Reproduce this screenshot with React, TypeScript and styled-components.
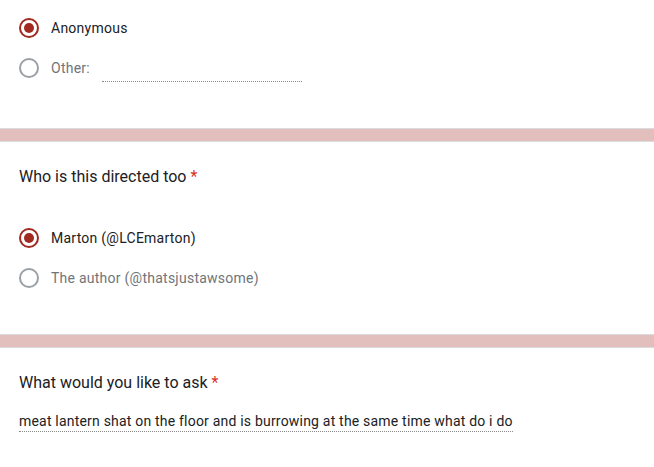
import React from "react";
import styled, { createGlobalStyle } from "styled-components";

const Global = createGlobalStyle`
  html, body { margin: 0; padding: 0; background: #fff; }
  body { font-family: Roboto, "Liberation Sans", Arial, sans-serif; }
`;

const Page = styled.div`
  display: flex;
  flex-direction: column;
  background: #e2bfbc;
  gap: 12px;
  width: 654px;
`;

const Card = styled.section<{ $pt: number; $pb: number; $top?: boolean }>`
  background: #fff;
  border-top: ${(p) => (p.$top ? "1px solid #dadce0" : "none")};
  border-bottom: 1px solid #dadce0;
  padding: ${(p) => p.$pt}px 19px ${(p) => p.$pb}px 19px;
  display: flex;
  flex-direction: column;
`;

const Title = styled.div<{ $mb: number }>`
  font-size: 16px;
  line-height: 24px;
  color: #202124;
  margin-bottom: ${(p) => p.$mb}px;
`;

const Star = styled.span`
  color: #d93025;
`;

const Row = styled.label`
  display: flex;
  align-items: center;
  height: 40px;
  gap: 12px;
`;

const Circle = styled.span<{ $on?: boolean }>`
  box-sizing: border-box;
  width: 20px;
  height: 20px;
  border-radius: 50%;
  border: 2px solid ${(p) => (p.$on ? "#a2291f" : "#9aa0a6")};
  display: flex;
  align-items: center;
  justify-content: center;
  flex: none;
  &::after {
    content: "";
    display: ${(p) => (p.$on ? "block" : "none")};
    width: 10px;
    height: 10px;
    border-radius: 50%;
    background: #a2291f;
  }
`;

const Label = styled.span<{ $muted?: boolean }>`
  font-size: 14px;
  line-height: 20px;
  color: ${(p) => (p.$muted ? "#70757a" : "#202124")};
  letter-spacing: 0.25px;
`;

const OtherInput = styled.span`
  display: block;
  width: 200px;
  height: 20px;
  border-bottom: 1px dotted #8a8a8a;
  align-self: flex-start;
  transform: translateY(13px);
`;

const Answer = styled.div`
  align-self: flex-start;
  font-size: 14px;
  line-height: 20px;
  color: #202124;
  letter-spacing: 0.2px;
  border-bottom: 1px dotted #8a8a8a;
`;

const Radio = ({ on, muted, children }: { on?: boolean; muted?: boolean; children: React.ReactNode }) => (
  <Row>
    <Circle $on={on} />
    <Label $muted={muted}>{children}</Label>
  </Row>
);

export default function App() {
  return (
    <>
      <Global />
      <Page>
        <Card $pt={8} $pb={40}>
          <Radio on>Anonymous</Radio>
          <Row>
            <Circle />
            <Label $muted>Other:</Label>
            <OtherInput />
          </Row>
        </Card>
        <Card $pt={23} $pb={36} $top>
          <Title $mb={29}>
            Who is this directed too <Star>*</Star>
          </Title>
          <Radio on>Marton (@LCEmarton)</Radio>
          <Radio muted>The author (@thatsjustawsome)</Radio>
        </Card>
        <Card $pt={23} $pb={40} $top>
          <Title $mb={16}>
            What would you like to ask <Star>*</Star>
          </Title>
          <Answer>meat lantern shat on the floor and is burrowing at the same time what do i do</Answer>
        </Card>
      </Page>
    </>
  );
}
